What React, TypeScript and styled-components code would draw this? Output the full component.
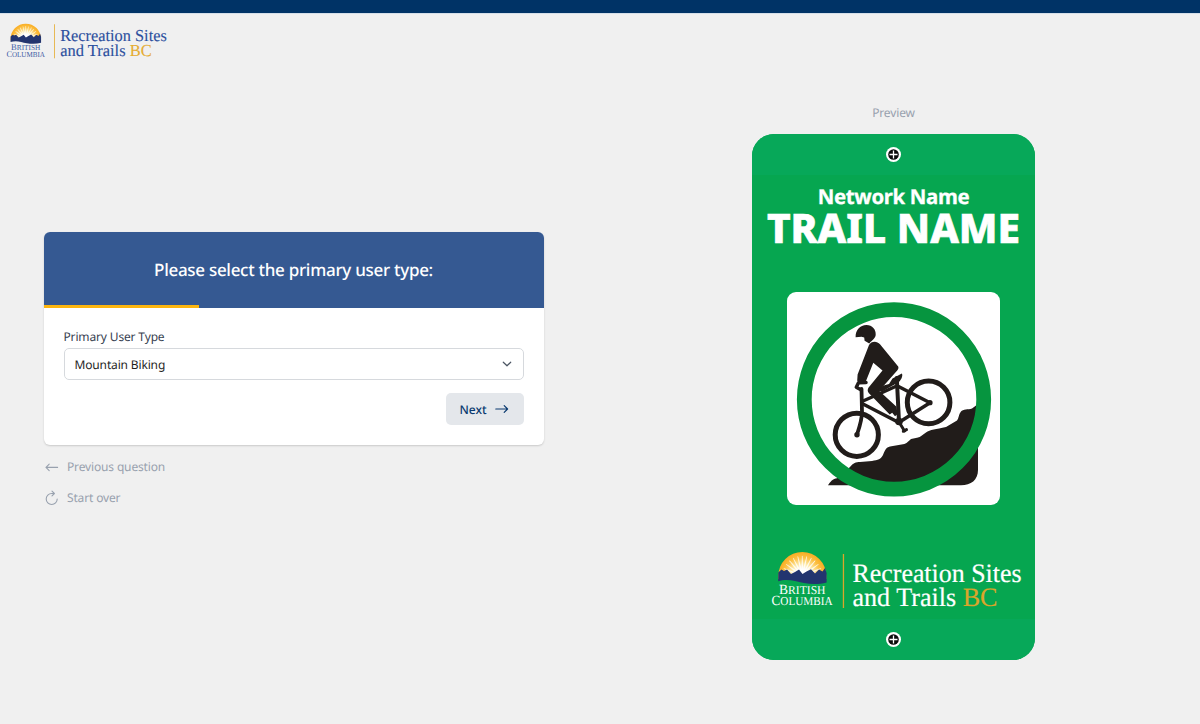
import React from 'react';
import styled, { createGlobalStyle } from 'styled-components';

const GlobalStyle = createGlobalStyle`
  * { box-sizing: border-box; }
  html, body { margin: 0; padding: 0; background: #f0f0f0; }
  body { font-family: "Noto Sans", "Open Sans", sans-serif; font-size: 12px; letter-spacing: -0.15px; color: #1f2937; text-rendering: geometricPrecision; }
  svg { display: block; letter-spacing: 0; }
`;

const Page = styled.div`
  display: flex;
  flex-direction: column;
  height: 724px;
  overflow: hidden;
`;

const TopBar = styled.div`
  flex: none;
  height: 14px;
  background: #003366;
  border-bottom: 1px solid #d5dfe9;
`;

const Header = styled.header`
  flex: none;
  height: 62px;
  padding: 8.5px 0 0 6px;
`;

const Main = styled.main`
  display: grid;
  grid-template-columns: 587px 587px;
  column-gap: 13px;
`;

const FormColumn = styled.section`
  display: flex;
  flex-direction: column;
  padding: 156px 43.5px 0;
`;

const Card = styled.div`
  height: 213px;
  border-radius: 6px;
  overflow: hidden;
  background: #fff;
  box-shadow: 0 1px 2px rgba(0, 0, 0, 0.16);
`;

const CardHeader = styled.div`
  display: flex;
  flex-direction: column;
  height: 76px;
  background: #355992;
`;

const Question = styled.h1`
  flex: 1;
  display: flex;
  align-items: center;
  justify-content: center;
  margin: 3px 0 0;
  color: #fff;
  font-size: 17px;
  font-weight: 500;
  letter-spacing: -0.29px;
  line-height: 24px;
`;

const Progress = styled.div<{ $percent: number }>`
  width: ${(p) => p.$percent}%;
  height: 3px;
  background: #fcb50f;
`;

const CardBody = styled.div`
  display: flex;
  flex-direction: column;
  padding: 20px 20px 0;
`;

const Label = styled.label`
  height: 17px;
  line-height: 18px;
  color: #374151;
`;

const Select = styled.div`
  display: flex;
  align-items: center;
  justify-content: space-between;
  height: 32px;
  margin-top: 3px;
  padding: 0 11px 0 10px;
  border: 1px solid #d6d9dd;
  border-radius: 5px;
  color: #1f1f1f;
`;

const NextButton = styled.button`
  display: flex;
  align-items: center;
  align-self: flex-end;
  justify-content: space-between;
  width: 78px;
  height: 32px;
  margin-top: 13px;
  padding: 0 15px 0 14px;
  border: 0;
  border-radius: 5px;
  background: #e4e7eb;
  color: #0a3a70;
  font: 500 12px "Noto Sans", sans-serif;
  text-rendering: geometricPrecision;
`;

const LinkList = styled.nav`
  display: flex;
  flex-direction: column;
  gap: 14px;
  padding: 13px 0 0 1.5px;
`;

const LinkRow = styled.a`
  display: flex;
  align-items: center;
  gap: 8px;
  height: 17px;
  color: #98a1ae;
`;

const PreviewColumn = styled.section`
  display: flex;
  flex-direction: column;
  align-items: center;
  padding-top: 28px;
`;

const PreviewLabel = styled.div`
  height: 17px;
  line-height: 18px;
  color: #98a1ae;
`;

const Sign = styled.div`
  display: flex;
  flex-direction: column;
  width: 283px;
  height: 526px;
  margin-top: 13px;
  border-radius: 22px;
  overflow: hidden;
  background: #06a650;
`;

const HoleBand = styled.div`
  flex: none;
  display: flex;
  align-items: center;
  justify-content: center;
  height: 41px;
  background: #07a859;
`;

const SignFace = styled.div`
  flex: 1;
  display: flex;
  flex-direction: column;
  align-items: center;
  color: #fff;
`;

const NetworkName = styled.div`
  margin-top: 9px;
  height: 24px;
  font-size: 20.4px;
  font-weight: 700;
  line-height: 24px;
  letter-spacing: -0.35px;
  -webkit-text-stroke: 0.3px #fff;
  white-space: nowrap;
`;

const TrailName = styled.div`
  height: 41px;
  font-size: 40.6px;
  font-weight: 800;
  letter-spacing: 0;
  line-height: 40px;
  -webkit-text-stroke: 0.7px #fff;
  white-space: nowrap;
`;

const Pictogram = styled.div`
  width: 213px;
  height: 213px;
  margin-top: 43px;
  border-radius: 9px;
  overflow: hidden;
  background: #fff;
`;

const SignLogo = styled.div`
  height: 62px;
  margin-top: 46px;
  padding-left: 9px;
`;

type LogoProps = {
  width: number;
  text: string;
  province: string;
  gold: string;
  shift: number;
  lift: number;
  id: string;
};

const rays = [-82, -68, -54, -40, -27, -13, 0, 13, 27, 40, 54, 68, 82];

function Logo({ width, text, province, gold, shift, lift, id }: LogoProps) {
  const w = 254 + shift;
  return (
    <svg width={width} height={(width * 64) / w} viewBox={`0 0 ${w} 64`} fontFamily='"Liberation Serif", serif'>
      <defs>
        <radialGradient id={id} gradientUnits="userSpaceOnUse" cx="31.3" cy="25" r="25">
          <stop offset="0.25" stopColor="#fff" />
          <stop offset="0.5" stopColor="#fde7a2" />
          <stop offset="0.75" stopColor="#fcc043" />
          <stop offset="1" stopColor="#f8a91c" />
        </radialGradient>
      </defs>
      <path d="M7.3 25 A24 24 0 0 1 55.3 25 L55.3 28 H7.3 Z" fill={`url(#${id})`} />
      {rays.map((a) => (
        <path key={a} d="M30.2 25 L30.9 5.5 L31.3 4.6 L31.7 5.5 L32.4 25 Z" fill="#fff" opacity="0.8" transform={`rotate(${a} 31.3 25)`} />
      ))}
      <path
        d="M7.3 21.5 L10.5 18.5 L13 20 L16 18.5 L20 23 L24 21 L28 18.5 L31.5 23 L35.5 20.5 L40 18.2 L44 22.5 L48 18.5 L51.5 20.5 L54 17 L55.6 22 V31.5 C43 35 32 32 24 30 C18 28.6 12 28.6 7.2 30.2 Z"
        fill="#23356f"
      />
      <g fill={province}>
        <text x="8" y="43.3" fontSize="12" textLength="46.5" lengthAdjust="spacingAndGlyphs">
          <tspan fontSize="14">B</tspan>RITISH
        </text>
        <text x="0.6" y="53.5" fontSize="12" textLength="61" lengthAdjust="spacingAndGlyphs">
          <tspan fontSize="14">C</tspan>OLUMBIA
        </text>
      </g>
      <rect x={71.8 + shift} y={3 - lift / 2} width="1.3" height="54" fill={gold} />
      <g fill={text} stroke={text} strokeWidth="0.2" fontSize="26.5">
        <text x={81.5 + shift} y={31 - lift} textLength="169" lengthAdjust="spacingAndGlyphs">
          Recreation Sites
        </text>
        <text x={81.5 + shift} y={54.7 - lift} textLength="145" lengthAdjust="spacingAndGlyphs">
          and Trails <tspan fill={gold} stroke={gold}>BC</tspan>
        </text>
      </g>
    </svg>
  );
}

const MountingHole = () => (
  <svg width="15" height="15" viewBox="0 0 15 15">
    <circle cx="7.5" cy="7.5" r="7.5" fill="#fff" />
    <circle cx="7.5" cy="7.5" r="5.3" fill="#0c0c0c" />
    <path d="M7.5 3.5V11.5M3.5 7.5H11.5" stroke="#fff" strokeWidth="1.3" />
  </svg>
);

const ChevronDown = () => (
  <svg width="10" height="10" viewBox="0 0 10 10" fill="none" stroke="#4b5563" strokeWidth="1.2" strokeLinecap="round" strokeLinejoin="round">
    <path d="M1.3 3.2L5 6.8L8.7 3.2" />
  </svg>
);

const ArrowRight = () => (
  <svg width="14" height="10" viewBox="0 0 14 10" fill="none" stroke="currentColor" strokeWidth="1.2" strokeLinecap="round" strokeLinejoin="round">
    <path d="M0.8 5H12.6M9.2 1.6L12.6 5L9.2 8.4" />
  </svg>
);

const ArrowLeft = () => (
  <svg width="14" height="10" viewBox="0 0 14 10" fill="none" stroke="currentColor" strokeWidth="1.1" strokeLinecap="round" strokeLinejoin="round">
    <path d="M12.6 5.4H1M4.2 2.2L1 5.4L4.2 8.6" />
  </svg>
);

const Restart = () => (
  <svg width="14" height="16" viewBox="0 0 14 16" fill="none" stroke="currentColor" strokeWidth="1.1" strokeLinecap="round" strokeLinejoin="round">
    <path d="M12.2 9A5.5 5.5 0 1 1 6.7 3.5H9.3M7 1.2L9.4 3.5L7 5.9" />
  </svg>
);

const MountainBiker = () => (
  <svg width="213" height="213" viewBox="787 292 213 213">
    <path
      d="M828 485.3C830 482 833 478.5 837 478.3L850 467C853 463 856 462 860 462L872 461C878 460 881 459 883 455C885 450 886 447.5 890 446.5L903 444.3C907 443.5 908 441.5 911 439L917 437.8C921 437 923 434.5 926 432.5C930 429.5 936 429.3 946 427L957 420.5C959 418 958.5 414.5 961 411.5C963 409 968 409.8 972 408.5L978 404V470C978 480 971 485.3 961 485.3Z"
      fill="#211c1a"
    />
    <circle cx="894" cy="399.4" r="89.7" fill="none" stroke="#06953f" strokeWidth="14.8" />
    <g fill="none" stroke="#211c1a" strokeLinecap="round" strokeLinejoin="round">
      <circle cx="856.8" cy="434.8" r="21.6" strokeWidth="5" />
      <circle cx="928.6" cy="402.4" r="21.3" strokeWidth="5" />
      <path d="M861.5 389L862 412C862 420 859.5 427 857 434.5" strokeWidth="3.8" />
      <path d="M863 404L898.8 422.5L930 402.7L897.5 386" strokeWidth="3.5" />
      <path d="M863 401L880 393.5L895.5 386.5" strokeWidth="3.2" />
      <path d="M896.8 378L899 422" strokeWidth="4" />
      <path d="M899 422L904.5 431" strokeWidth="3" />
      <path d="M903.3 431.3L906.5 429.6" strokeWidth="3" />
      <path d="M866 382.5L858.5 382.8L856.3 387.3L861.3 390" strokeWidth="3.5" />
    </g>
    <g fill="#211c1a">
      <circle cx="857" cy="434.8" r="2.7" />
      <circle cx="930" cy="402.7" r="2.6" />
      <circle cx="899" cy="421.5" r="3.8" />
      <path d="M855.6 337.2C855.4 330 860 325 866.5 325C872.3 325 876 329.5 875.7 334.7C875.5 338 872.6 339.6 869.3 343.4L864.6 340.8L864.2 337.6L861.6 336.7Z" />
      <path d="M869 345C871 341 876.8 340.4 880 344.2L898.2 366.5C899 368.2 898 369.6 896.3 371.6L883.7 385.8L878.8 390.5L896.5 406.8L897.5 414.2L895 416.3L892.2 412.7L889.7 414.5L868.7 393C867.3 391.2 867.5 389.4 868.6 387.6L882.5 370.5L873.3 362.8L865.8 381.6L861.5 383.4L857.2 380.7L857.6 374.5Z" />
      <path d="M901.8 373.6C903.2 375.5 901.5 379.5 899 382L883 391L878 391.5C880 386.5 884 385 889 384L892.5 378.5Z" />
    </g>
  </svg>
);

export default function App() {
  return (
    <>
      <GlobalStyle />
      <Page>
        <TopBar />
        <Header>
          <Logo id="header-sun" width={163} shift={4.5} lift={2} text="#2c4f9e" province="#3d5ca4" gold="#e5ac33" />
        </Header>
        <Main>
          <FormColumn>
            <Card>
              <CardHeader>
                <Question>Please select the primary user type:</Question>
                <Progress $percent={31} />
              </CardHeader>
              <CardBody>
                <Label>Primary User Type</Label>
                <Select>
                  <span>Mountain Biking</span>
                  <ChevronDown />
                </Select>
                <NextButton>
                  <span>Next</span>
                  <ArrowRight />
                </NextButton>
              </CardBody>
            </Card>
            <LinkList>
              <LinkRow>
                <ArrowLeft />
                <span>Previous question</span>
              </LinkRow>
              <LinkRow>
                <Restart />
                <span>Start over</span>
              </LinkRow>
            </LinkList>
          </FormColumn>
          <PreviewColumn>
            <PreviewLabel>Preview</PreviewLabel>
            <Sign>
              <HoleBand>
                <MountingHole />
              </HoleBand>
              <SignFace>
                <NetworkName>Network Name</NetworkName>
                <TrailName>TRAIL NAME</TrailName>
                <Pictogram>
                  <MountainBiker />
                </Pictogram>
                <SignLogo>
                  <Logo id="sign-sun" width={254} shift={0} lift={0} text="#fff" province="#fff" gold="#dba52a" />
                </SignLogo>
              </SignFace>
              <HoleBand>
                <MountingHole />
              </HoleBand>
            </Sign>
          </PreviewColumn>
        </Main>
      </Page>
    </>
  );
}
